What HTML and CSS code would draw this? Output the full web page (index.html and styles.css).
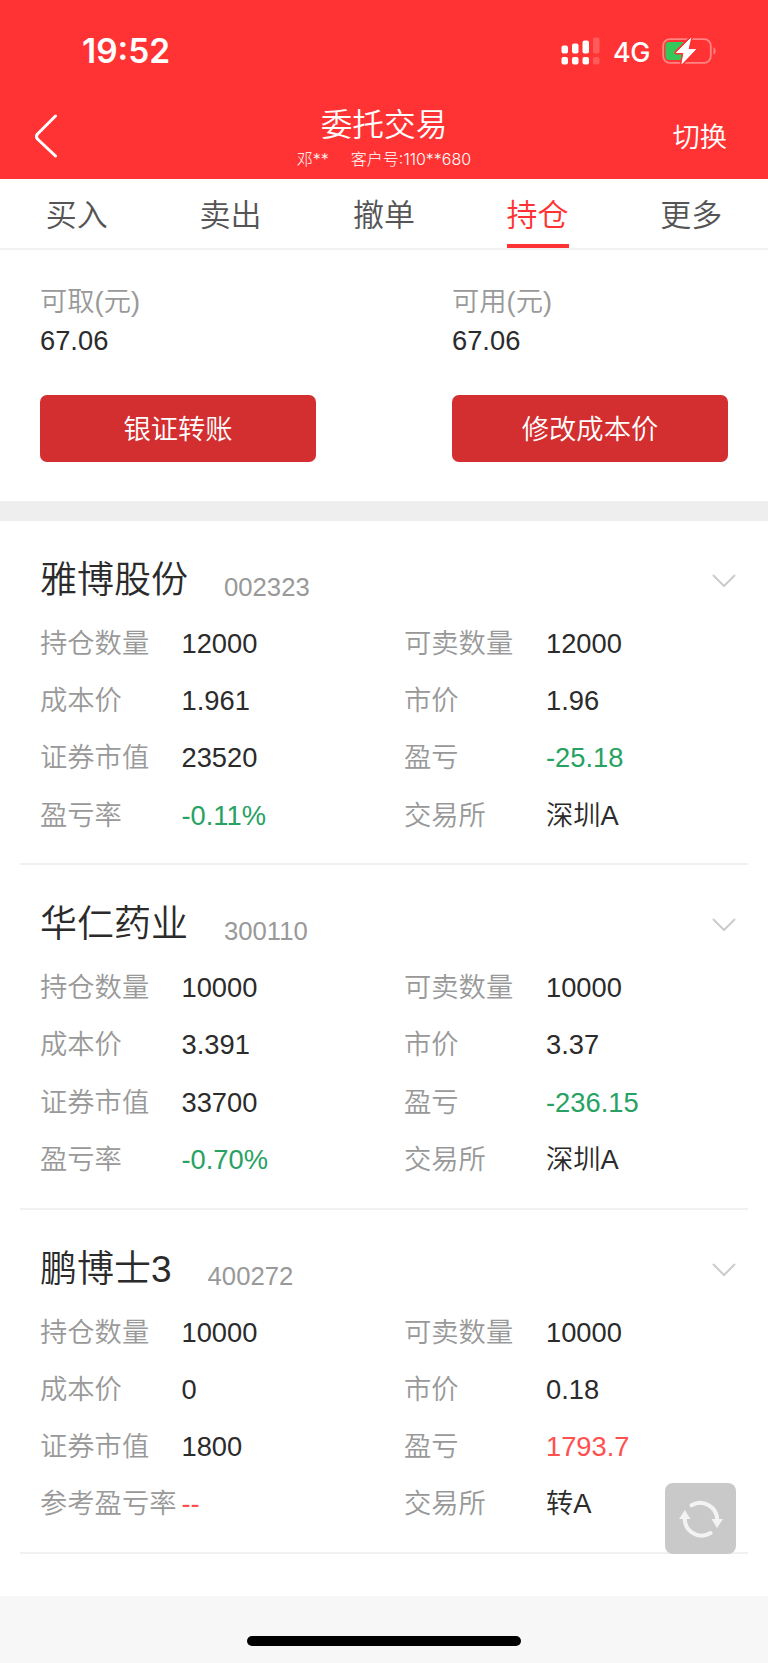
FILE: index.html
```html
<!DOCTYPE html>
<html lang="zh-CN">
<head>
  <meta charset="UTF-8">
  <title>委托交易</title>
  <link rel="stylesheet" href="styles.css">
</head>
<body>
  <header class="header">
    <div class="status-bar">
      <span class="time">19:52</span>
      <div class="status-icons">
        <svg class="signal" width="39" height="28" viewBox="0 0 39 28" fill="#fff">
          <rect x="0.5" y="8.5" width="6.5" height="8" rx="2"/>
          <rect x="11" y="6.5" width="6.5" height="10" rx="2"/>
          <rect x="21.5" y="3.5" width="6.5" height="13" rx="2"/>
          <rect x="0.5" y="20" width="6.5" height="7.5" rx="2"/>
          <rect x="11" y="20" width="6.5" height="7.5" rx="2"/>
          <rect x="21.5" y="20" width="6.5" height="7.5" rx="2"/>
          <rect x="32" y="0.5" width="6.5" height="16" rx="2" opacity="0.2"/>
          <rect x="32" y="20" width="6.5" height="7.5" rx="2" opacity="0.2"/>
        </svg>
        <span class="network">4G</span>
        <svg class="battery" width="55" height="28" viewBox="0 0 55 28">
          <rect x="1.2" y="2.2" width="47.6" height="23.6" rx="6.5" fill="none" stroke="#fff" stroke-opacity="0.4" stroke-width="1.8"/>
          <path d="M51.5 10.3c2.8 1 2.8 6.4 0 7.4z" fill="#fff" opacity="0.4"/>
          <path d="M7 5h18v18H7a3.5 3.5 0 0 1-3.5-3.5v-11A3.5 3.5 0 0 1 7 5z" fill="#34c759"/>
          <path d="M28.500 1.500 14.500 15.500h7.500l-2 11L33.500 12.500h-7.500z" fill="#fff" stroke="#f33" stroke-width="4" paint-order="stroke" stroke-linejoin="round"/>
          <path d="M28.500 1.500 14.500 15.500h7.500l-2 11L33.500 12.500h-7.500z" fill="#fff" stroke="#fff" stroke-width="1" stroke-linejoin="round"/>
        </svg>
      </div>
    </div>
    <div class="nav-bar">
      <div class="nav-left">
        <svg width="24" height="44" viewBox="0 0 24 44" fill="none" stroke="#fff" stroke-width="3" stroke-linecap="round" stroke-linejoin="round">
          <path d="M20.500 2 2.500 20q-2 2.500 0 5L20.500 42"/>
        </svg>
      </div>
      <div class="nav-title">
        <h1>委托交易</h1>
        <p><span>邓**</span><span>客户号:110**680</span></p>
      </div>
      <div class="nav-right">切换</div>
    </div>
  </header>

  <nav class="tabs">
    <div class="tab"><span>买入</span></div>
    <div class="tab"><span>卖出</span></div>
    <div class="tab"><span>撤单</span></div>
    <div class="tab active"><span>持仓</span></div>
    <div class="tab"><span>更多</span></div>
  </nav>

  <section class="funds">
    <div class="fund">
      <p class="fund-label">可取(元)</p>
      <p class="fund-value">67.06</p>
      <div class="button">银证转账</div>
    </div>
    <div class="fund">
      <p class="fund-label">可用(元)</p>
      <p class="fund-value">67.06</p>
      <div class="button">修改成本价</div>
    </div>
  </section>

  <main class="holdings">
    <section class="stock">
      <div class="stock-head">
        <h2>雅博股份</h2>
        <span class="code">002323</span>
        <svg class="chevron" width="24" height="14" viewBox="0 0 24 14"><path d="M1 1 12 12 23 1"/></svg>
      </div>
      <div class="stock-data">
        <span class="label">持仓数量</span><span>12000</span>
        <span class="label">可卖数量</span><span>12000</span>
        <span class="label">成本价</span><span>1.961</span>
        <span class="label">市价</span><span>1.96</span>
        <span class="label">证券市值</span><span>23520</span>
        <span class="label">盈亏</span><span class="down">-25.18</span>
        <span class="label">盈亏率</span><span class="down">-0.11%</span>
        <span class="label">交易所</span><span>深圳A</span>
      </div>
    </section>

    <section class="stock">
      <div class="stock-head">
        <h2>华仁药业</h2>
        <span class="code">300110</span>
        <svg class="chevron" width="24" height="14" viewBox="0 0 24 14"><path d="M1 1 12 12 23 1"/></svg>
      </div>
      <div class="stock-data">
        <span class="label">持仓数量</span><span>10000</span>
        <span class="label">可卖数量</span><span>10000</span>
        <span class="label">成本价</span><span>3.391</span>
        <span class="label">市价</span><span>3.37</span>
        <span class="label">证券市值</span><span>33700</span>
        <span class="label">盈亏</span><span class="down">-236.15</span>
        <span class="label">盈亏率</span><span class="down">-0.70%</span>
        <span class="label">交易所</span><span>深圳A</span>
      </div>
    </section>

    <section class="stock">
      <div class="stock-head">
        <h2>鹏博士3</h2>
        <span class="code">400272</span>
        <svg class="chevron" width="24" height="14" viewBox="0 0 24 14"><path d="M1 1 12 12 23 1"/></svg>
      </div>
      <div class="stock-data">
        <span class="label">持仓数量</span><span>10000</span>
        <span class="label">可卖数量</span><span>10000</span>
        <span class="label">成本价</span><span>0</span>
        <span class="label">市价</span><span>0.18</span>
        <span class="label">证券市值</span><span>1800</span>
        <span class="label">盈亏</span><span class="up">1793.7</span>
        <span class="label">参考盈亏率</span><span class="up">--</span>
        <span class="label">交易所</span><span>转A</span>
      </div>
    </section>

    <!-- floating refresh button -->
    <div class="refresh">
      <svg width="71" height="71" viewBox="0 0 71 71">
        <g fill="none" stroke="#f3f3f3" stroke-width="4" stroke-linecap="round">
          <path d="M26.5 22.3A17 17 0 0 1 52.2 37"/>
          <path d="M45.5 50A17 17 0 0 1 19.7 35"/>
        </g>
        <path d="M46.500 36h11.500l-6 9z" fill="#f3f3f3"/>
        <path d="M14 36h11.500l-5.700-9z" fill="#f3f3f3"/>
      </svg>
    </div>
  </main>

  <footer class="footer">
    <div class="home-bar"></div>
  </footer>
</body>
</html>
```

FILE: styles.css
```css
* {
  box-sizing: border-box;
}
body {
  margin: 0;
  width: 768px;
  height: 1663px;
  display: flex;
  flex-direction: column;
  background: #fff;
  color: #2b2b2b;
  font-family: "Liberation Sans", "Noto Sans CJK SC", sans-serif;
  font-size: 27.3px;
  font-weight: 350;
}
h1, h2, p {
  margin: 0;
  font-weight: 350;
}
.header {
  height: 179px;
  background: #f33;
  color: #fff;
}
.status-bar {
  height: 93px;
  padding: 9px 51px 0 82px;
  display: flex;
  align-items: center;
  justify-content: space-between;
}
.time {
  font-family: Inter, sans-serif;
  font-size: 33.5px;
  font-weight: 600;
}
.status-icons {
  display: flex;
  align-items: center;
}
.network {
  margin: 2px 12px 0 13px;
  font-family: Inter, sans-serif;
  font-size: 27px;
  font-weight: 500;
  letter-spacing: -0.5px;
}
.nav-bar {
  height: 86px;
  padding: 0 41px 0 35px;
  display: grid;
  grid-template-columns: 1fr auto 1fr;
}
.nav-left {
  padding-top: 21px;
}
.nav-title {
  padding-left: 6px;
  text-align: center;
}
.nav-title h1 {
  height: 54px;
  line-height: 64px;
  font-size: 31.7px;
}
.nav-title p {
  display: flex;
  justify-content: center;
  gap: 22px;
  font-family: Inter, "Noto Sans CJK SC", sans-serif;
  font-size: 16px;
  font-weight: 300;
  line-height: 24px;
}
.nav-right {
  text-align: right;
  line-height: 90px;
}
.tabs {
  height: 71px;
  display: grid;
  grid-template-columns: repeat(5, 1fr);
  border-bottom: 2px solid #f2f2f2;
}
.tab {
  text-align: center;
  font-size: 31px;
  line-height: 73px;
  color: #555;
}
.tab span {
  display: inline-block;
  height: 69px;
}
.active {
  color: #f33;
}
.active span {
  border-bottom: 4px solid #f33;
}
.funds {
  height: 271px;
  padding: 32px 40px 0;
  display: flex;
  justify-content: space-between;
  border-bottom: 20px solid #eee;
}
.fund {
  width: 276px;
}
.fund-label {
  line-height: 40px;
  color: #999;
}
.fund-value {
  line-height: 38px;
}
.button {
  height: 67px;
  margin-top: 35px;
  border-radius: 7px;
  background: #d32f30;
  color: #fff;
  line-height: 69px;
  text-align: center;
}
.holdings {
  position: relative;
  height: 1075px;
  padding: 0 20px;
}
.stock {
  height: 344.3px;
  padding: 34px 12px 0 20px;
  border-bottom: 2px solid #f1f1f1;
}
.stock-head {
  height: 60px;
  display: flex;
  align-items: flex-start;
}
.stock-head h2 {
  font-size: 37px;
  line-height: 52px;
}
.code {
  margin-left: 36px;
  font-size: 25.7px;
  line-height: 64px;
  color: #999;
}
.chevron {
  margin: 19px 0 0 auto;
  fill: none;
  stroke: #ccc;
  stroke-width: 2;
}
.stock-data {
  display: grid;
  grid-template-columns: 141.5px 222.5px 142px 1fr;
  grid-auto-rows: 57.2px;
  line-height: 57px;
}
.label {
  line-height: 58px;
  white-space: nowrap;
  color: #999;
}
.down {
  color: #27a263;
}
.up {
  color: #ff5050;
}
.refresh {
  position: absolute;
  right: 32px;
  bottom: 42px;
  width: 71px;
  height: 71px;
  border-radius: 8px;
  background: #c9c9c9;
}
.footer {
  flex: 1;
  padding-top: 40px;
  background: #f7f7f7;
}
.home-bar {
  width: 274px;
  height: 10px;
  margin: 0 auto;
  border-radius: 5px;
  background: #000;
}
```
